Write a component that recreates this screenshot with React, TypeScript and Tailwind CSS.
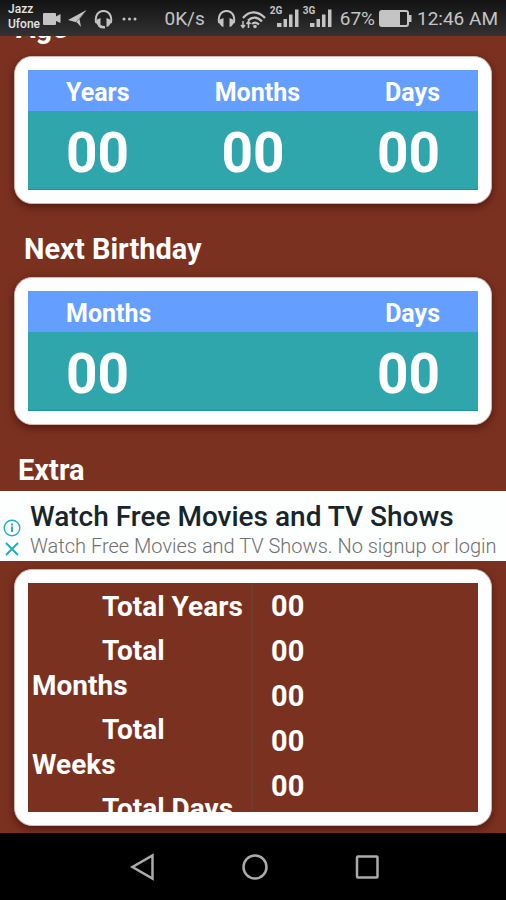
import type { ReactNode } from "react";

interface Stat {
	label: string;
	value: string;
}

const age: Stat[] = [
	{ label: "Years", value: "00" },
	{ label: "Months", value: "00" },
	{ label: "Days", value: "00" },
];

const nextBirthday: Stat[] = [
	{ label: "Months", value: "00" },
	{ label: "Days", value: "00" },
];

const extraLabels = ["Total Years", "Total Months", "Total Weeks", "Total Days"];
const extraValues = ["00", "00", "00", "00", "00"];

function HeadphonesIcon({ mic = false }: { mic?: boolean }) {
	return (
		<svg viewBox="0 0 19 20" className="h-5 w-[19px] shrink-0" fill="none">
			<path
				d="M2.200 14C.5 7 4 2 9.500 2s9 5 7.300 12"
				stroke="currentColor"
				strokeWidth="2"
			/>
			<path
				d="M3 10.500 6.500 9v9l-2-.8L2 14zM16 10.500 12.500 9v9l2-.8L17 14z"
				fill="currentColor"
			/>
			{mic && (
				<path
					d="M5 16.500c1.500 1.500 3 2 6 1.800"
					stroke="currentColor"
					strokeWidth="2.500"
				/>
			)}
		</svg>
	);
}

function SignalIcon({ network }: { network: string }) {
	return (
		<div className="relative h-5 w-[29px] shrink-0">
			<span className="absolute -top-1 left-0 text-[10px] leading-3 font-bold">
				{network}
			</span>
			<svg viewBox="0 0 29 20" className="h-5 w-[29px]" fill="currentColor">
				<rect x="7" y="14" width="4.500" height="4" />
				<rect x="13.500" y="10" width="3.500" height="8" />
				<rect x="19" y="5.500" width="3.500" height="12.500" />
				<rect x="25" y="0.500" width="3.500" height="17.500" />
			</svg>
		</div>
	);
}

function StatusBar() {
	return (
		<header className="relative z-10 flex h-9 shrink-0 items-center justify-between bg-linear-to-b from-[#131313] to-[#323232] px-2 pt-[2px] text-[#c4c4c4]">
			<div className="flex items-center gap-[7px]">
				<div className="-mt-1 -mr-1 text-xs leading-[15px] font-medium text-[#e4e4e4]">
					<p>Jazz</p>
					<p>Ufone</p>
				</div>
				<svg viewBox="0 0 18 12" className="h-3 w-[18px]" fill="currentColor">
					<path d="M1 0h11a1 1 0 0 1 1 1v2.500L17.500 1v9L13 8v3a1 1 0 0 1-1 1H1a1 1 0 0 1-1-1V1a1 1 0 0 1 1-1z" />
				</svg>
				<svg viewBox="0 0 19 18" className="h-[18px] w-[19px]" fill="currentColor">
					<path d="M18.500 0 11.500 9l1.500 8-4-4.500L0 10z" />
					<path d="M18 1 8 12" stroke="#555" strokeWidth="0.600" />
				</svg>
				<HeadphonesIcon mic />
				<svg viewBox="0 0 15 4" className="ml-[2px] h-1 w-[15px]" fill="currentColor">
					<circle cx="2" cy="2" r="1.500" />
					<circle cx="7.500" cy="2" r="1.500" />
					<circle cx="13" cy="2" r="1.500" />
				</svg>
			</div>

			<div className="flex items-center gap-1 text-[19px] leading-6">
				<span className="mr-2">0K/s</span>
				<HeadphonesIcon />
				<svg viewBox="0 0 26 20" className="h-5 w-[26px]" fill="none">
					<path
						d="M3 9C9 1.500 18 1.500 25 9M8 11.500c4-4 9.500-4 14 1M12 15c2-2 4.500-2 7 .5"
						stroke="currentColor"
						strokeWidth="2.200"
					/>
					<circle cx="15" cy="17.500" r="1.800" fill="currentColor" />
					<path
						d="M3 12v6M1 16l2 2.500L5 16M8.500 19v-6M6.500 15l2-2.500 2 2.500"
						stroke="currentColor"
						strokeWidth="1.500"
					/>
				</svg>
				<SignalIcon network="2G" />
				<SignalIcon network="3G" />
				<div className="ml-1 flex items-center">
					<span>67%</span>
					<svg viewBox="0 0 34 18" className="ml-1 h-[18px] w-[34px]" fill="none">
						<rect x="1" y="1" width="28" height="15" rx="2" stroke="currentColor" strokeWidth="2" />
						<rect x="2" y="2" width="19" height="13" fill="currentColor" />
						<path d="M30 5h2.500v7H30z" fill="currentColor" />
					</svg>
				</div>
				<span>12:46 AM</span>
			</div>
		</header>
	);
}

function Card({ children, className = "" }: { children: ReactNode; className?: string }) {
	return (
		<div
			className={`mx-[14px] rounded-[18px] border border-[#d8b9b0] bg-white p-[13px] shadow-[0_3px_8px_rgba(40,0,0,0.5)] ${className}`}
		>
			{children}
		</div>
	);
}

function StatTable({ stats }: { stats: Stat[] }) {
	return (
		<Card>
			<div className="flex h-[41px] items-center justify-between bg-[#649fff] px-[38px] pt-1 text-[25px] leading-8 font-bold">
				{stats.map((stat) => (
					<span key={stat.label}>{stat.label}</span>
				))}
			</div>
			<div className="flex h-[79px] items-center justify-between border-b border-[#1c9497] bg-[#2fa6ab] px-[38px] pt-[6px] text-[55px] leading-[64px] font-bold">
				{stats.map((stat) => (
					<span key={stat.label}>{stat.value}</span>
				))}
			</div>
		</Card>
	);
}

function AdBanner() {
	return (
		<aside className="flex h-[70px] shrink-0 items-end bg-[#fdfefe]">
			<div className="flex w-[30px] flex-col gap-1 pb-1 pl-[3px] text-[#22aebd]">
				<button aria-label="About this ad">
					<svg viewBox="0 0 18 18" className="size-[18px]" fill="none" stroke="currentColor">
						<circle cx="9" cy="9" r="7.800" strokeWidth="1.400" />
						<path d="M9 7.500V13M9 4.500v2" strokeWidth="2" />
					</svg>
				</button>
				<button aria-label="Close ad">
					<svg viewBox="0 0 18 16" className="h-4 w-[18px]" fill="none" stroke="currentColor">
						<path d="m3 2 12 12M15 2 3 14" strokeWidth="2" />
					</svg>
				</button>
			</div>
			<a href="#" className="min-w-0 flex-1 whitespace-nowrap">
				<p className="text-[28px] leading-[34px] font-medium text-[#18262a]">
					Watch Free Movies and TV Shows
				</p>
				<p className="pb-[3px] text-xl leading-6 font-light text-[#707070]">
					Watch Free Movies and TV Shows. No signup or login
				</p>
			</a>
		</aside>
	);
}

function NavBar() {
	return (
		<nav className="flex h-[67px] shrink-0 items-center justify-center gap-[84px] bg-black pl-[3px] text-[#aaa]">
			<button aria-label="Back">
				<svg viewBox="0 0 28 28" className="size-7" fill="none" stroke="currentColor" strokeWidth="2.500">
					<path d="M23.500 2.500v23L3.500 14z" />
				</svg>
			</button>
			<button aria-label="Home">
				<svg viewBox="0 0 28 28" className="size-7" fill="none" stroke="currentColor" strokeWidth="2.500">
					<circle cx="14" cy="14" r="11.500" />
				</svg>
			</button>
			<button aria-label="Recent apps">
				<svg viewBox="0 0 28 28" className="size-7" fill="none" stroke="currentColor" strokeWidth="2.500">
					<rect x="4" y="3.500" width="20.500" height="21" rx="1" />
				</svg>
			</button>
		</nav>
	);
}

export default function App() {
	return (
		<div className="flex h-screen flex-col overflow-hidden bg-[#7b3120] font-['Roboto',sans-serif] text-white">
			<StatusBar />

			<main className="flex min-h-0 flex-1 flex-col overflow-hidden">
				{/* scrolled so the first heading sits under the status bar */}
				<section className="-mt-[25px] shrink-0">
					<h2 className="mb-[10px] pl-4 text-[29px] leading-[35px] font-bold">Age</h2>
					<StatTable stats={age} />
				</section>

				<section className="mt-7 shrink-0">
					<h2 className="mb-[10px] pl-6 text-[29px] leading-[35px] font-bold">
						Next Birthday
					</h2>
					<StatTable stats={nextBirthday} />
				</section>

				<h2 className="mt-7 mb-[3px] shrink-0 pl-[18px] text-[29px] leading-[35px] font-bold">
					Extra
				</h2>
				<AdBanner />

				<Card className="mt-2 mb-[7px] flex min-h-0 flex-1">
					<div className="flex min-h-0 flex-1 overflow-hidden bg-[#7b3120] leading-[35px] font-bold">
						<ul className="flex w-1/2 flex-col gap-[9px] border-r-2 border-[#6a3d2e] pt-[6px] pl-1 text-[28px]">
							{extraLabels.map((label) => (
								<li key={label} className="indent-[70px]">
									{label}
								</li>
							))}
						</ul>
						<ul className="flex flex-1 flex-col gap-[10px] pt-[6px] pl-[18px] text-[29px]">
							{extraValues.map((value, i) => (
								<li key={i}>{value}</li>
							))}
						</ul>
					</div>
				</Card>
			</main>

			<NavBar />
		</div>
	);
}
